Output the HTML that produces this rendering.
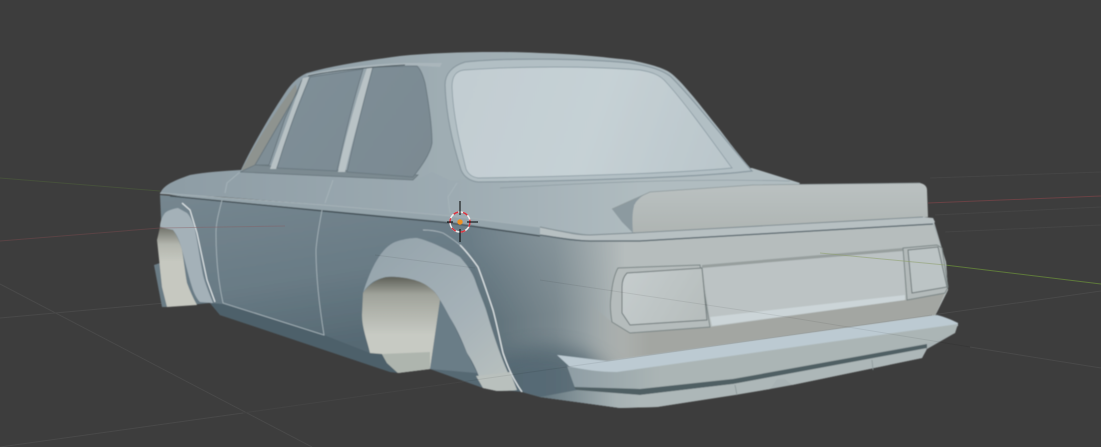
<!DOCTYPE html>
<html>
<head>
<meta charset="utf-8">
<style>
html,body{margin:0;padding:0;background:#3d3d3d;width:1101px;height:447px;overflow:hidden}
svg{display:block}
</style>
</head>
<body>
<svg width="1101" height="447" viewBox="0 0 1101 447" xmlns="http://www.w3.org/2000/svg">
<defs>
<linearGradient id="side" gradientUnits="userSpaceOnUse" x1="0" y1="205" x2="30" y2="395"><stop offset="0" stop-color="#778891"/><stop offset=".6" stop-color="#6a7c86"/><stop offset="1" stop-color="#566973"/></linearGradient>
<linearGradient id="sideR" gradientUnits="userSpaceOnUse" x1="470" y1="0" x2="625" y2="0"><stop offset="0" stop-color="#b6bdbd" stop-opacity="0"/><stop offset=".55" stop-color="#b6bdbd" stop-opacity=".38"/><stop offset="1" stop-color="#b6bdbd" stop-opacity="1"/></linearGradient>
<linearGradient id="deck" gradientUnits="userSpaceOnUse" x1="170" y1="0" x2="640" y2="0"><stop offset="0" stop-color="#8e9da5"/><stop offset=".6" stop-color="#9dabb2"/><stop offset="1" stop-color="#b0bcc0"/></linearGradient>
<linearGradient id="roof" gradientUnits="userSpaceOnUse" x1="300" y1="0" x2="700" y2="0"><stop offset="0" stop-color="#8f9ea6"/><stop offset=".35" stop-color="#9fadb3"/><stop offset="1" stop-color="#a9b6bb"/></linearGradient>
<linearGradient id="glass" gradientUnits="userSpaceOnUse" x1="450" y1="70" x2="740" y2="170"><stop offset="0" stop-color="#c2cdd2"/><stop offset=".5" stop-color="#c6d1d5"/><stop offset="1" stop-color="#b9c5ca"/></linearGradient>
<linearGradient id="win" gradientUnits="userSpaceOnUse" x1="280" y1="70" x2="430" y2="175"><stop offset="0" stop-color="#7f8f98"/><stop offset="1" stop-color="#7b8a92"/></linearGradient>
<linearGradient id="wheel" gradientUnits="userSpaceOnUse" x1="0" y1="277" x2="0" y2="335"><stop offset="0" stop-color="#5f6159"/><stop offset=".3" stop-color="#a0a39b"/><stop offset="1" stop-color="#c7cac3"/></linearGradient>
<linearGradient id="wheelF" gradientUnits="userSpaceOnUse" x1="0" y1="227" x2="0" y2="262"><stop offset="0" stop-color="#70726a"/><stop offset=".5" stop-color="#b3b6ae"/><stop offset="1" stop-color="#c6c8c0"/></linearGradient>
<linearGradient id="flare" gradientUnits="userSpaceOnUse" x1="370" y1="240" x2="500" y2="390"><stop offset="0" stop-color="#94a3ab"/><stop offset=".6" stop-color="#a6b2b8"/><stop offset="1" stop-color="#b9c1bf"/></linearGradient>
<linearGradient id="lower" gradientUnits="userSpaceOnUse" x1="585" y1="0" x2="650" y2="0"><stop offset="0" stop-color="#a3a6a2" stop-opacity="0"/><stop offset="1" stop-color="#a3a6a2"/></linearGradient>
<linearGradient id="val" gradientUnits="userSpaceOnUse" x1="540" y1="0" x2="640" y2="0"><stop offset="0" stop-color="#62757e"/><stop offset=".75" stop-color="#a6b1b3"/><stop offset="1" stop-color="#adb7b8"/></linearGradient>
<linearGradient id="bface" gradientUnits="userSpaceOnUse" x1="570" y1="0" x2="660" y2="0"><stop offset="0" stop-color="#8f9ea5"/><stop offset="1" stop-color="#abb5b5"/></linearGradient>
<linearGradient id="spoil" gradientUnits="userSpaceOnUse" x1="0" y1="185" x2="0" y2="235"><stop offset="0" stop-color="#bac1c1"/><stop offset="1" stop-color="#aeb4b2"/></linearGradient>
<linearGradient id="tail" gradientUnits="userSpaceOnUse" x1="620" y1="270" x2="710" y2="325"><stop offset="0" stop-color="#c6cdce"/><stop offset="1" stop-color="#b5bcbb"/></linearGradient>
<filter id="b1" x="-5%" y="-5%" width="110%" height="110%"><feGaussianBlur stdDeviation=".4"/></filter>
<filter id="b8" x="-30%" y="-30%" width="160%" height="160%"><feGaussianBlur stdDeviation="9"/></filter>
<clipPath id="lowc"><path d="M480,300L640,340L640,400L620,408L540,397L522,392L490,385Z"/></clipPath>
</defs>
<rect width="1101" height="447" fill="#3d3d3d"/>

<!-- floor grid -->
<g fill="none" stroke="#494949" stroke-width="1">
<path d="M0,284L312,447"/><path d="M0,318L165,303"/><path d="M0,447L243,413L932,315L1101,291"/>
<path d="M970,347L1101,368"/>
</g>
<g fill="none" stroke="#454545" stroke-width="1">
<path d="M930,178L1101,172"/><path d="M935,215L1101,207"/><path d="M945,232L1101,225"/>
</g>
<path d="M0,241L160,228" stroke="#5a4345" fill="none"/>
<path d="M928,203L1101,196" stroke="#6a4245" fill="none"/>
<path d="M0,178L160,191" stroke="#46503c" fill="none"/>
<path d="M945,265L1101,284" stroke="#5f7a3b" fill="none"/>

<g filter="url(#b1)">
<!-- underlay of rear and bumper -->
<path d="M540,228L640,236L933,218L946,262L948,290L935,316L958,323L955,333L927,349L922,358L792,385L770,389L657,407L620,408L540,397Z" fill="#a8b2b4"/>

<!-- lower side -->
<path d="M160,195L323,207L450,220L540,233L640,241L640,400L620,408L540,397L522,392L483,388L430,369L398,373L220,315L210,303L167,307L162,240Z" fill="url(#side)"/>
<path d="M470,225L640,241L640,400L620,408L540,397L522,392L490,380L480,300Z" fill="url(#sideR)"/>
<g clip-path="url(#lowc)"><ellipse cx="545" cy="392" rx="75" ry="45" fill="#516570" opacity=".8" filter="url(#b8)"/></g>

<!-- roof and C pillar -->
<path d="M240,172C250,150 270,115 287,90C293,82 298,77 307,73C335,65 370,60 400,56C440,52 500,51 540,53C580,54 610,58 630,60C650,64 665,68 672,74C685,85 700,105 720,130C735,150 745,162 752,170L800,184L450,200L240,180Z" fill="url(#roof)"/>
<path d="M296,84C280,105 260,135 241,171L255,166L297,93Z" fill="#8e938f"/>

<!-- deck -->
<path d="M160,194C163,186 170,182 190,175C205,172 225,171 240,170L416,180L432,172L450,180L752,168L800,183L760,230L640,238L590,236L540,228L450,216L323,205L223,197Z" fill="url(#deck)"/>
<path d="M500,188C570,184 680,178 790,181" stroke="#8f9da3" stroke-width=".7" fill="none"/>

<!-- rear window surround -->
<path d="M445,85C445,74 452,66 465,62C500,58 580,58 630,63C650,66 662,70 670,76C690,95 725,140 752,171C700,177 580,181 478,182C470,181 464,177 461,170C453,145 446,115 445,85Z" fill="#b2bfc4" stroke="#8a99a0" stroke-width="1.2"/>
<path d="M452,87C452,76 456,71 464,70C520,66 590,66 640,70C652,72 660,75 666,82C686,104 710,138 732,168C680,173 590,176 478,178C472,177 468,174 466,169C460,145 453,115 452,87Z" fill="url(#glass)" stroke="#92a1a8" stroke-width=".9"/>

<!-- window base -->
<path d="M240,172L255,165L418,175L413,180Z" fill="#7c8a91" stroke="#69777e" stroke-width=".8"/>
<!-- side windows -->
<path d="M255,165L297,93L302,80L285,118L269,165Z" fill="#7f8e96" stroke="#6a787f" stroke-width="1"/>
<path d="M270,169L303,78L309,77L276,169Z" fill="#b7c1c4"/>
<path d="M277,168C287,135 298,105 310,77L363,69C352,105 345,135 337,171Z" fill="url(#win)" stroke="#6c7a82" stroke-width="1"/>
<path d="M338,172C346,135 356,100 367,68L374,67C364,100 354,135 345,172Z" fill="#b9c3c6"/>
<path d="M347,172C355,135 364,100 373,67L417,66C421,70 423,76 425,83C429,105 432,125 432,143C430,155 420,168 413,177Z" fill="url(#win)" stroke="#6c7a82" stroke-width="1"/>
<!-- drip rail -->
<path d="M305,75C330,69 370,64 405,63L442,63L440,67L407,65C370,67 335,71 310,76Z" fill="#aab6bb"/>
<path d="M308,76C330,71 370,67 405,65" stroke="#4d5a60" stroke-width="1" fill="none"/>

<!-- moulding on side -->
<path d="M160,193L323,205L450,216L540,227L590,235L640,235L640,241L590,241L540,235L450,222L323,210L190,198Z" fill="#95a4ab"/>
<path d="M170,196L323,211L450,223L540,236" stroke="#3f4b51" stroke-width="1.2" fill="none"/>
<path d="M160,193L323,205L450,216L540,227" stroke="#a9b5ba" stroke-width=".7" fill="none"/>

<!-- rear panel -->
<path d="M625,241L933,224L946,262L948,290L935,316L625,360Z" fill="#b6bdbd"/>
<!-- lower band -->
<path d="M585,300L612,322L630,333L710,327L905,300L945,293L935,316L607,362L575,362Z" fill="url(#lower)"/>

<!-- recessed panel -->
<path d="M702,265L903,249L905,295L710,317Z" fill="#bcc3c4"/>
<path d="M702,265L903,248L903,251L702,268Z" fill="#979f9e"/>
<path d="M710,317L905,295L905,300L712,326Z" fill="#ccd5d8"/>

<!-- tail lights -->
<path d="M618,268L700,265L710,327L630,333L612,322C610,310 610,303 611,297C612,285 614,275 618,268Z" fill="#b5bcbc" stroke="#7a8585" stroke-width="1"/>
<path d="M627,273L702,268L707,320L630,325L622,313L622,287C622,280 624,276 627,273Z" fill="url(#tail)" stroke="#6f797a" stroke-width="1"/>
<path d="M903,248L937,245L942,248L948,287L945,293L907,300Z" fill="#b3baba" stroke="#7a8585" stroke-width="1"/>
<path d="M908,250L938,247L947,287L912,293Z" fill="#bcc4c5" stroke="#6f797a" stroke-width="1"/>

<!-- spoiler -->
<path d="M612,209L650,192L634,205L633,233L622,222Z" fill="#8c9aa0"/>
<path d="M633,233C632,220 632,208 636,202C640,197 645,194 650,192L753,185L920,183C925,184 927,187 927,190L928,217Z" fill="url(#spoil)"/>
<path d="M612,209L650,192L753,185L920,183" stroke="#8f9a9c" stroke-width=".8" fill="none"/>

<!-- trunk moulding -->
<path d="M540,227C560,231 575,235 590,235L633,233L923,217L933,218L935,222L933,224L640,241L590,241L540,235Z" fill="#b7c0c2"/>
<path d="M540,235C560,238 575,241 590,241L640,241L933,224" stroke="#55636b" stroke-width="1.3" fill="none"/>
<path d="M540,227C560,231 575,235 590,235L633,233L923,217" stroke="#7f8c91" stroke-width=".9" fill="none"/>

<!-- side skirt -->
<path d="M210,303L223,304L324,335L370,353L382,354L387,363L398,373L390,372L220,315Z" fill="#4e606a"/>

<!-- rear flare -->
<path d="M363,293C367,280 372,268 377,260C383,250 390,243 398,241C405,239 411,238 417,238C427,240 447,249 460,257C467,265 472,272 475,280C480,295 485,305 487,313C492,330 496,342 500,353C505,367 511,380 517,390C510,391 503,391 497,391L483,388C480,378 475,365 467,353C462,340 455,325 450,318C446,310 443,305 440,300C437,294 434,291 430,288C423,283 418,281 413,280C405,278 395,276 387,277C381,278 376,280 373,282C369,285 365,289 363,293Z" fill="url(#flare)"/>
<path d="M440,300L453,323L467,353L477,373L430,369Z" fill="#6b7d87"/>
<path d="M363,293C368,285 378,278 387,277C405,276 423,281 430,288C435,292 438,296 440,300L430,369L398,373L387,363L382,354L370,353C367,340 362,328 362,315Z" fill="url(#wheel)"/>
<path d="M382,354L430,352L430,369L398,373L387,363Z" fill="#aeb5ae"/>
<path d="M423,230C430,230 437,231 443,233C450,237 455,241 460,245" stroke="#a9b5bb" stroke-width=".9" fill="none"/>
<path d="M460,245C467,252 473,260 478,267C483,280 488,295 493,310C497,325 500,340 503,353C508,368 515,382 522,392" stroke="#dde3e5" stroke-width="1.3" fill="none"/>
<path d="M483,388L497,391L517,390L510,372L476,376Z" fill="#b9c0bd"/>

<!-- front wheel -->
<path d="M154,265L160,263L167,307L162,307Z" fill="#6b7c85"/>
<path d="M178,208C172,209 167,211 165,213C162,217 160,222 160,227L173,230C178,236 180,243 182,250C186,265 189,278 193,290C195,295 197,299 200,302L213,303C209,293 205,283 203,275C200,260 198,245 195,230C193,222 190,216 187,213Z" fill="#a4b1b8"/>
<path d="M160,227L157,240L162,287L167,307L197,305C193,298 190,291 187,283C185,272 184,262 182,250C180,243 177,236 173,230Z" fill="url(#wheelF)"/>
<path d="M182,203L190,210L197,233L207,280L215,302" stroke="#dde3e5" stroke-width="1.2" fill="none"/>

<!-- seams -->
<g fill="none" stroke="#a8b5bb" stroke-width=".8">
<path d="M222,200C219,212 216,222 216,233C216,260 219,285 223,303L324,335C320,310 316,280 316,250C317,235 320,222 322,210"/>
<path d="M240,172L227,183L225,193"/>
<path d="M333,180L325,203"/>
<path d="M457,183L448,197L450,213"/>
</g>

<!-- bumper -->
<path d="M557,355L607,361L937,315C945,317 952,320 958,323L958,326L617,374C600,372 585,370 570,367Z" fill="#bccad2"/>
<path d="M567,366C585,370 600,372 617,372L958,324L955,333L933,342L733,380L640,390L575,388Z" fill="url(#bface)"/>
<path d="M574,387L640,389L733,379L927,344L927,349L733,384L640,395L577,391Z" fill="#4f5f64"/>
<path d="M540,397L577,390L640,395L733,384L927,348L922,358L792,385L785,379L777,379L770,389L735,395L657,407L620,408Z" fill="url(#val)"/>
<path d="M735,385L737,395M872,360L873,370" stroke="#8a9597" stroke-width=".8"/>
</g>

<!-- overlay lines across car -->
<g fill="none" stroke="#000" stroke-opacity=".07" stroke-width="1">
<path d="M243,413L932,315"/><path d="M540,280L787,317L970,347"/>
<path d="M375,255L475,268"/>
</g>
<path d="M160,228L285,226" stroke="#8a5a60" stroke-opacity=".4" fill="none"/>
<path d="M820,253L945,265" stroke="#8d9e6a" stroke-opacity=".55" fill="none"/>

<!-- 3D cursor -->
<circle cx="460" cy="222" r="10" fill="none" stroke="#eeeeee" stroke-width="1.5"/>
<circle cx="460" cy="222" r="10" fill="none" stroke="#d8333f" stroke-width="1.5" stroke-dasharray="5 5"/>
<path d="M460,201V215M460,229V242M447,222H453M467,222H478" stroke="#000" stroke-width="1"/>
<circle cx="460" cy="222" r="2.7" fill="#ef9020"/>
</svg>
</body>
</html>
